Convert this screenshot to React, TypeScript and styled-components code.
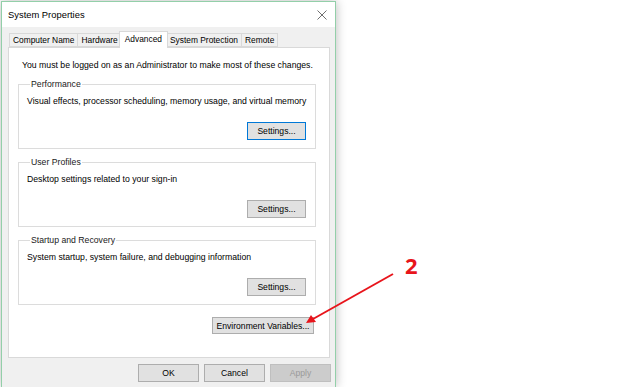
import React from "react";
import styled, { createGlobalStyle } from "styled-components";

const GlobalStyle = createGlobalStyle`
  html, body {
    margin: 0;
    padding: 0;
    background: #ffffff;
    overflow: hidden;
  }
  body {
    font-family: "Liberation Sans", Arial, sans-serif;
    font-size: 8.7px;
    color: #000;
  }
`;

const Stage = styled.div`
  position: relative;
  width: 640px;
  height: 387px;
  padding: 1px 0 0 1px;
  box-sizing: border-box;
  overflow: hidden;
`;

const Window = styled.div`
  width: 335px;
  height: 386px;
  box-sizing: border-box;
  border: 1px solid #93cfa9;
  border-bottom: none;
  background: #f0f0f0;
  box-shadow: 0 0 10px rgba(0, 0, 0, 0.28);
  display: flex;
  flex-direction: column;
`;

const TitleBar = styled.div`
  height: 25px;
  flex-shrink: 0;
  background: #ffffff;
  display: flex;
  align-items: center;
  justify-content: space-between;
  padding: 0 8px 0 6px;
  font-size: 9.4px;
`;

const CloseIcon = styled.svg`
  width: 10px;
  height: 10px;
  margin-top: 1px;
`;

const Body = styled.div`
  display: flex;
  flex-direction: column;
  padding: 6px 4px 0 6px;
`;

const TabStrip = styled.div`
  display: flex;
  align-items: flex-end;
  margin-left: 1px;
  height: 14px;
  position: relative;
  z-index: 1;
  font-size: 8.4px;
`;

const Tab = styled.div<{ $active?: boolean }>`
  box-sizing: border-box;
  height: ${(p) => (p.$active ? "17px" : "14px")};
  margin: ${(p) => (p.$active ? "0 -2px -1px -2px" : "0")};
  padding: ${(p) => (p.$active ? "0 5px 2px" : "0 3px")};
  border: 1px solid #d9d9d9;
  border-bottom: ${(p) => (p.$active ? "none" : "1px solid #d9d9d9")};
  border-right: ${(p) => (p.$active ? "1px solid #d9d9d9" : "none")};
  background: ${(p) => (p.$active ? "#ffffff" : "#f0f0f0")};
  display: flex;
  align-items: center;
  white-space: nowrap;
  position: relative;
  z-index: ${(p) => (p.$active ? 2 : 0)};

  &:last-child {
    border-right: 1px solid #d9d9d9;
  }
`;

const TabPanel = styled.div`
  box-sizing: border-box;
  height: 311px;
  margin-right: 1px;
  border: 1px solid #d9d9d9;
  background: #ffffff;
  padding: 11px 13px 0 9px;
  display: flex;
  flex-direction: column;
  gap: 7px;
`;

const Note = styled.div`
  line-height: 12px;
  margin-left: 4px;
  white-space: nowrap;
`;

const Group = styled.fieldset`
  margin: 0;
  padding: 5px 9px 8px 8px;
  border: 1px solid #dcdcdc;
  display: flex;
  flex-direction: column;
  min-width: 0;
`;

const Legend = styled.legend`
  padding: 0 1px;
  margin-left: 3px;
  line-height: 12px;
  color: #1a1a1a;
`;

const Description = styled.div`
  line-height: 12px;
  white-space: nowrap;
`;

const Button = styled.button<{ $width: number; $default?: boolean }>`
  box-sizing: border-box;
  width: ${(p) => p.$width}px;
  height: 18px;
  padding: 0;
  font-family: "Liberation Sans", Arial, sans-serif;
  font-size: 8.6px;
  color: #000;
  background: #e1e1e1;
  border: 1px solid ${(p) => (p.$default ? "#0078d7" : "#adadad")};
  border-radius: 0;
  white-space: nowrap;

  &:disabled {
    background: #cccccc;
    border-color: #bfbfbf;
    color: #9a9a9a;
  }
`;

const GroupButton = styled(Button)`
  align-self: flex-end;
  margin-top: 15px;
`;

const EnvButton = styled(Button)`
  align-self: flex-end;
  height: 17px;
  margin: 5px 2px 0 0;
`;

const ButtonRow = styled.div`
  display: flex;
  justify-content: flex-end;
  gap: 5px;
  margin-top: 6px;
`;

const Annotation = styled.svg`
  position: absolute;
  left: 0;
  top: 0;
  width: 640px;
  height: 387px;
  pointer-events: none;
`;

const StepNumber = styled.div`
  position: absolute;
  left: 405px;
  top: 250px;
  font-family: "Open Sans", sans-serif;
  font-weight: 700;
  font-size: 22px;
  line-height: 30px;
  color: #e8141b;
`;

const groups = [
  {
    title: "Performance",
    text: "Visual effects, processor scheduling, memory usage, and virtual memory",
    isDefault: true,
  },
  { title: "User Profiles", text: "Desktop settings related to your sign-in" },
  {
    title: "Startup and Recovery",
    text: "System startup, system failure, and debugging information",
  },
];

const tabs = ["Computer Name", "Hardware", "Advanced", "System Protection", "Remote"];

export default function App() {
  return (
    <Stage>
      <GlobalStyle />
      <Window>
        <TitleBar>
          <span>System Properties</span>
          <CloseIcon viewBox="0 0 10 10">
            <path d="M0.5 0.5 L9.5 9.5 M9.5 0.5 L0.5 9.5" stroke="#6f6f6f" strokeWidth="1" />
          </CloseIcon>
        </TitleBar>
        <Body>
          <TabStrip>
            {tabs.map((t) => (
              <Tab key={t} $active={t === "Advanced"}>
                {t}
              </Tab>
            ))}
          </TabStrip>
          <TabPanel>
            <Note>You must be logged on as an Administrator to make most of these changes.</Note>
            {groups.map((g) => (
              <Group key={g.title}>
                <Legend>{g.title}</Legend>
                <Description>{g.text}</Description>
                <GroupButton $width={59} $default={g.isDefault}>
                  Settings...
                </GroupButton>
              </Group>
            ))}
            <EnvButton $width={102}>Environment Variables...</EnvButton>
          </TabPanel>
          <ButtonRow>
            <Button $width={61}>OK</Button>
            <Button $width={61}>Cancel</Button>
            <Button $width={61} disabled>
              Apply
            </Button>
          </ButtonRow>
        </Body>
      </Window>
      <Annotation viewBox="0 0 640 387">
        <line x1="393" y1="274" x2="313" y2="319" stroke="#e8141b" strokeWidth="2" />
        <polygon points="306,323 311,315 316,322" fill="#e8141b" />
      </Annotation>
      <StepNumber>2</StepNumber>
    </Stage>
  );
}
